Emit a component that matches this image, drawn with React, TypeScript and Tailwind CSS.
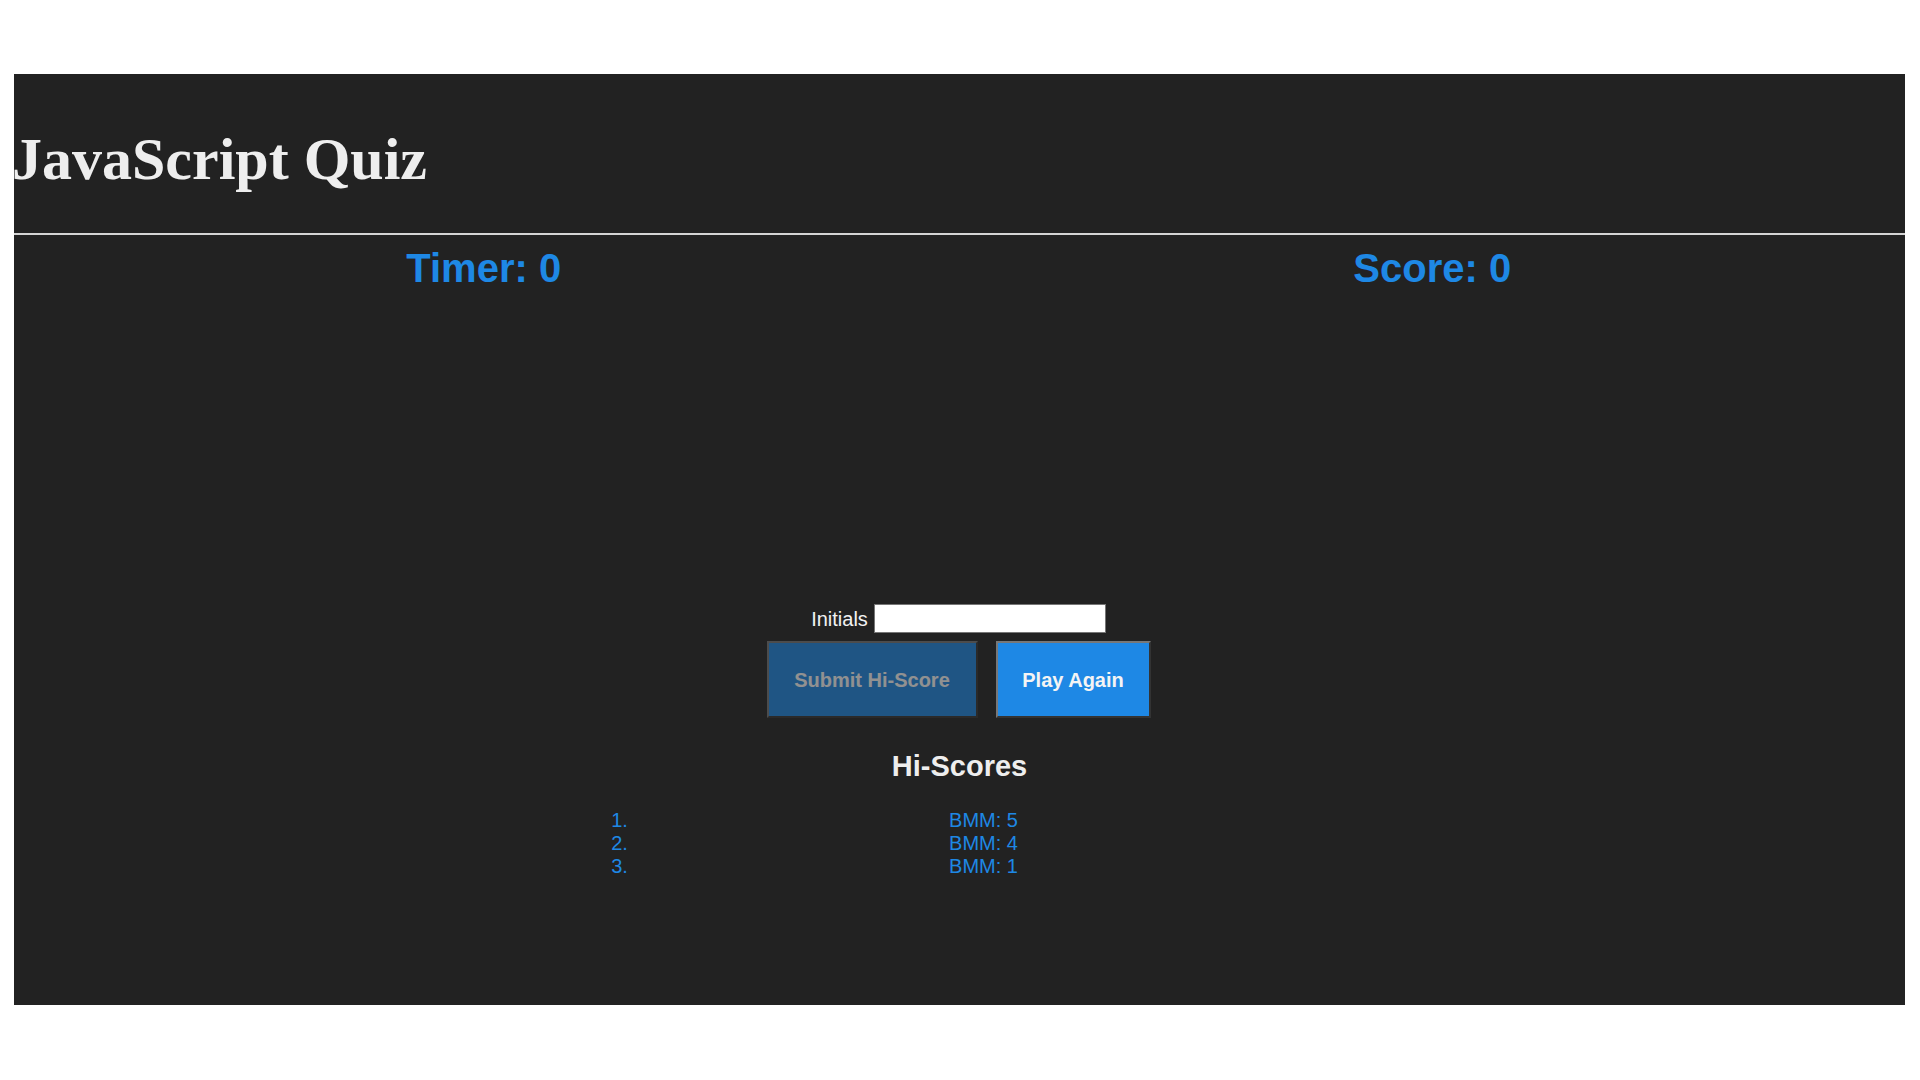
const scores = ["BMM: 5", "BMM: 4", "BMM: 1"];

export default function App() {
  return (
    <div className="min-h-screen bg-white pt-[74px] pl-[14px] pr-[15px] font-['Liberation_Sans',Arial,sans-serif]">
      <main className="h-[931px] overflow-hidden bg-[#222222]">
        <header className="border-b-2 border-[#d4d4d4] pt-[51px] pb-[39px]">
          <h1 className="-ml-[2px] font-['Liberation_Serif','Times_New_Roman',serif] text-[60px] font-bold leading-[69px] text-[#eeeeee]">
            JavaScript Quiz
          </h1>
        </header>

        <div className="mt-[10px] grid grid-cols-2 text-center text-[40px] font-bold leading-[46px] text-[#1e88e5]">
          <p className="-ml-[6px]">Timer: 0</p>
          <p>Score: 0</p>
        </div>

        {/* question area, empty once the game is over */}
        <div className="h-[313px]" />

        <section className="flex flex-col items-center">
          <div className="-ml-[2px] flex h-[29px] items-center gap-[6px] text-[20px] text-[#f2f2f2]">
            <label htmlFor="initials">Initials</label>
            <input
              id="initials"
              type="text"
              className="h-[29px] w-[232px] border border-[#767676] bg-white"
            />
          </div>

          <div className="-ml-[2px] mt-[8px] flex gap-[18px] text-[20px] font-bold">
            <button
              disabled
              className="h-[77px] w-[211px] border-2 border-t-[#777] border-l-[#777] border-r-[#333] border-b-[#333] bg-[#1e88e5] text-white opacity-50"
            >
              Submit Hi-Score
            </button>
            <button className="h-[77px] w-[155px] border-2 border-t-[#777] border-l-[#777] border-r-[#333] border-b-[#333] bg-[#1e88e5] text-[#f4f4f4]">
              Play Again
            </button>
          </div>

          <h2 className="mt-[32px] text-[29px] font-bold leading-[33px] text-[#eeeeee]">Hi-Scores</h2>
        </section>

        <ol className="mx-auto mt-[26px] w-[732px] list-decimal pl-10 text-[20px] leading-[23px] text-[#1e88e5]">
          {scores.map((s, i) => (
            <li key={i} className="text-center">
              <span className="relative left-[4px]">{s}</span>
            </li>
          ))}
        </ol>
      </main>
    </div>
  );
}
